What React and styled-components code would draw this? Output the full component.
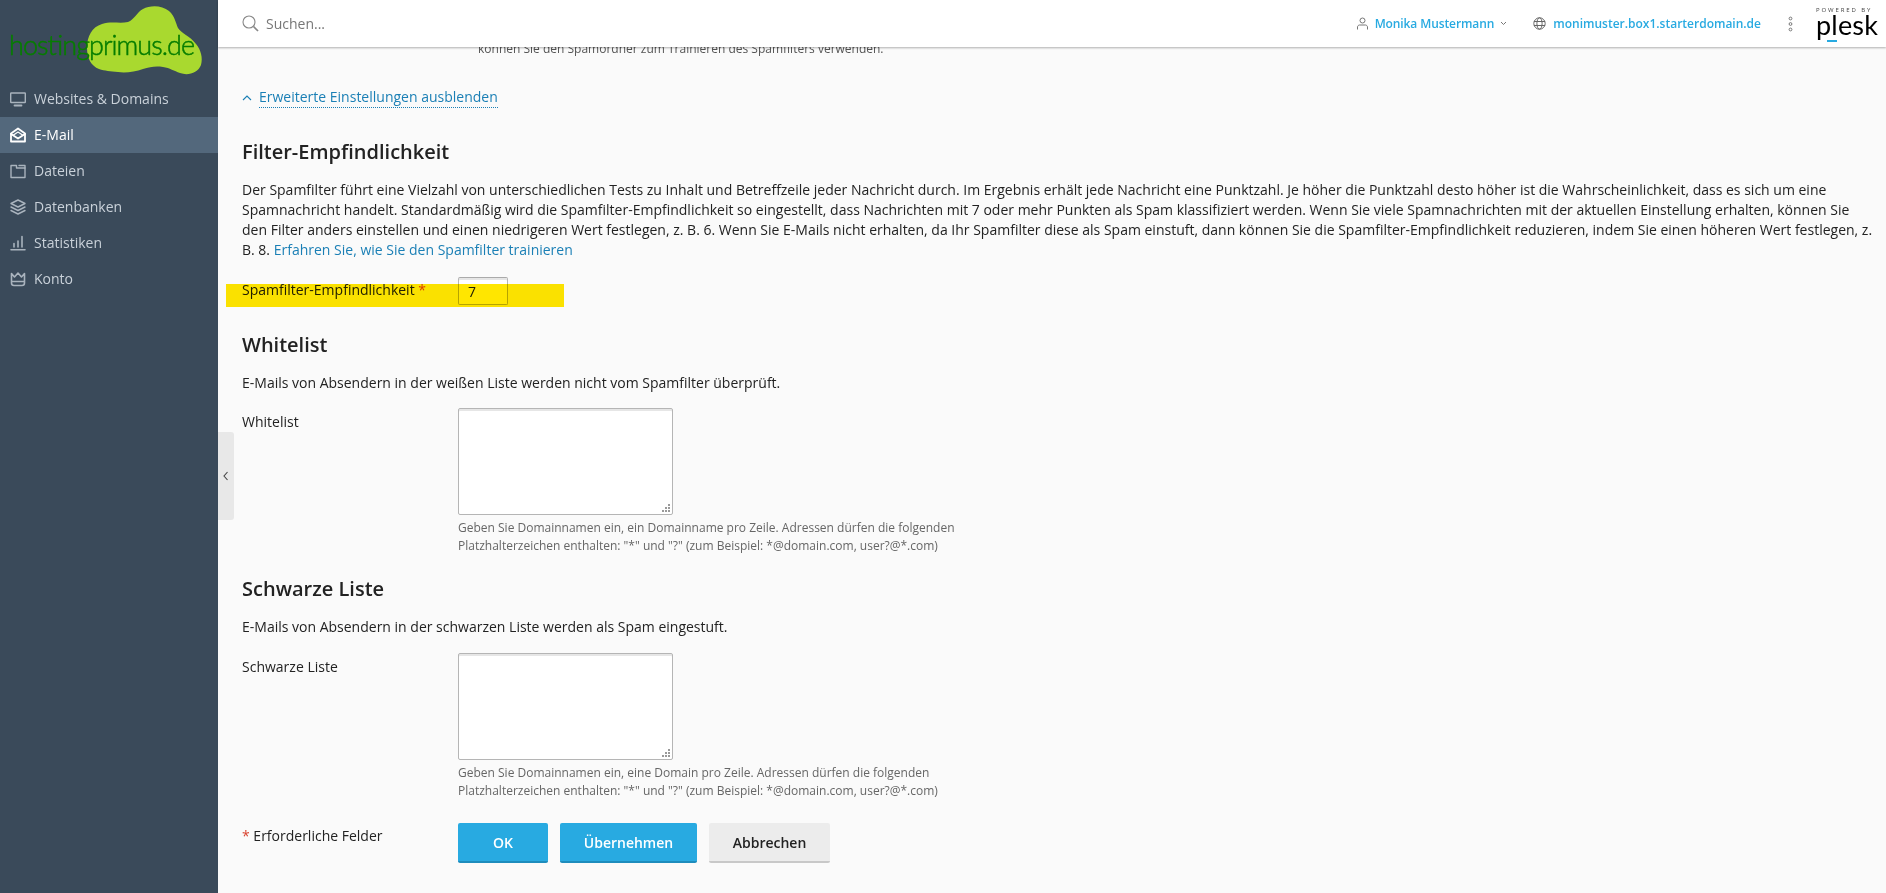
import React from "react";
import styled, { createGlobalStyle } from "styled-components";

const Global = createGlobalStyle`
  html, body { margin: 0; padding: 0; height: 100%; }
  body { font-family: "Open Sans", "Liberation Sans", sans-serif; font-size: 14px; line-height: 20px; color: #222; background: #fafafa; overflow: hidden; }
  #root { height: 100%; }
  * { box-sizing: border-box; }
`;

const Page = styled.div`
  position: relative;
  display: flex;
  width: 1886px;
  height: 893px;
  overflow: hidden;
`;
const Sidebar = styled.aside`
  flex: 0 0 218px;
  background: #3a4a5a;
  display: flex;
  flex-direction: column;
`;
const LogoBox = styled.div`
  height: 81px;
  flex: none;
`;
const NavList = styled.nav`
  display: flex;
  flex-direction: column;
`;
const NavItem = styled.a`
  display: flex;
  align-items: center;
  height: 36px;
  gap: 8px;
  padding-left: 10px;
  color: ${p => (p.$active ? "#fff" : "#c9d1d9")};
  background: ${p => (p.$active ? "#53687c" : "transparent")};
  font-size: 14px;
  svg { flex: none; color: ${p => (p.$active ? "#fff" : "#a9b3bd")}; }
`;
const Collapse = styled.div`
  position: absolute;
  left: 218px;
  top: 432px;
  width: 16px;
  height: 88px;
  background: #e8e8e8;
  border-radius: 0 3px 3px 0;
  display: flex;
  align-items: center;
  justify-content: center;
  z-index: 3;
`;
const Right = styled.div`
  flex: 1;
  min-width: 0;
  display: flex;
  flex-direction: column;
`;
const Header = styled.header`
  height: 47px;
  flex: none;
  display: flex;
  align-items: center;
  background: #fff;
  box-shadow: 0 1px 2px rgba(0,0,0,.3);
  padding: 0 13px 0 24px;
  z-index: 2;
`;
const Search = styled.div`
  flex: 1;
  display: flex;
  align-items: center;
  gap: 7px;
  color: #777;
  font-size: 14px;
`;
const HeaderLink = styled.span`
  display: flex;
  align-items: center;
  color: #28aae1;
  font-size: 12px;
  font-weight: 600;
  svg { flex: none; color: #777; }
`;
const UserLink = styled(HeaderLink)`
  gap: 6px;
  margin-right: 26px;
  letter-spacing: -0.1px;
`;
const DomainLink = styled(HeaderLink)`
  gap: 7px;
  margin-right: 27px;
`;
const Dots = styled.div`
  display: flex;
  margin-right: 23px;
  color: #777;
`;
const PleskBox = styled.div`
  position: relative;
  width: 57px;
  height: 40px;
  color: #111;
`;
const Powered = styled.div`
  font-size: 6px;
  line-height: 8px;
  letter-spacing: 1.9px;
  white-space: nowrap;
  color: #444;
  margin-top: 2px;
`;
const PleskWord = styled.div`
  font-family: "Lato", sans-serif;
  font-weight: 400;
  font-size: 27px;
  line-height: 22px;
  letter-spacing: .2px;
  color: #000;
`;
const PleskBar = styled.div`
  position: absolute;
  left: 11px;
  top: 36px;
  width: 10px;
  height: 2px;
  background: #28aae1;
`;
const Main = styled.main`
  flex: 1;
  min-height: 0;
  overflow: hidden;
  padding: 0 10px 0 24px;
`;
const ClippedNote = styled.div`
  height: 9px;
  margin-left: 236px;
  font-size: 12px;
  line-height: 3px;
  color: #555;
  overflow: hidden;
  white-space: nowrap;
`;
const ToggleRow = styled.div`
  display: flex;
  align-items: center;
  gap: 7px;
  margin-top: 31px;
  height: 21px;
`;
const Toggle = styled.a`
  color: #1a7fb5;
  font-size: 14px;
  line-height: 20px;
  border-bottom: 1px dotted #1a7fb5;
`;
const Heading = styled.h2`
  margin: ${p => p.$top}px 0 0;
  font-size: 20px;
  line-height: 24px;
  font-weight: 600;
  color: #222;
`;
const Para = styled.p`
  margin: ${p => p.$top}px 0 0;
  font-size: 14px;
  line-height: 20px;
`;
const TextLink = styled.a`
  color: #1a7fb5;
`;
const FormRow = styled.div`
  position: relative;
  display: flex;
  margin-top: ${p => p.$top}px;
`;
const Label = styled.label`
  flex: 0 0 216px;
  padding-top: ${p => p.$pad}px;
  font-size: 14px;
  line-height: 20px;
`;
const Star = styled.span`
  color: #d9432f;
`;
const SmallInput = styled.div`
  width: 50px;
  height: 28px;
  border: 1px solid #b5b5b5;
  border-top-color: #aaa;
  border-radius: 2px;
  background: #fff;
  box-shadow: inset 0 2px 0 #e6e6e6;
  padding: 4px 0 0 9px;
  font-size: 14px;
  line-height: 20px;
`;
const Highlight = styled.div`
  position: absolute;
  left: -16px;
  top: 7px;
  width: 338px;
  height: 23px;
  background: #ffe600;
  mix-blend-mode: multiply;
`;
const Field = styled.div`
  display: flex;
  flex-direction: column;
`;
const TextArea = styled.div`
  position: relative;
  width: 215px;
  height: 107px;
  border: 1px solid #b5b5b5;
  border-radius: 2px;
  background: #fff;
  box-shadow: inset 0 2px 0 #e6e6e6;
`;
const Grip = styled.svg`
  position: absolute;
  right: 1px;
  bottom: 1px;
`;
const Hint = styled.div`
  margin-top: 4px;
  font-size: 12px;
  line-height: 18px;
  color: #666;
  white-space: nowrap;
`;
const Actions = styled.div`
  display: flex;
  gap: 12px;
`;
const Button = styled.button`
  width: ${p => p.$w}px;
  height: 40px;
  border: 0;
  border-bottom: 2px solid ${p => (p.$primary ? "#1e8cbc" : "#c8c8c8")};
  border-radius: 2px;
  background: ${p => (p.$primary ? "#28aae1" : "#ececec")};
  color: ${p => (p.$primary ? "#fff" : "#222")};
  font-family: inherit;
  font-size: 14px;
  font-weight: 600;
  padding: 0;
`;

const Logo = () => (
  <svg width="218" height="81" viewBox="0 0 218 81" style={{ display: "block" }}>
    <path fill="#a9d92f" d="M128 22C134 20 137 12 143 9C150 5 162 5 169 11C175 16 176 24 178 28C181 33 190 36 196 44C201 50 203 58 201 65C198 73 188 76 180 73C174 71 170 68 163 67C155 66 150 67 143 69C135 72 125 73 118 72C110 71 105 71 99 69C91 66 87 58 87 48C87 36 92 27 102 24C111 21 120 24 128 22Z" />
    <text x="9" y="55" textLength="186" lengthAdjust="spacing" fill="#067d00" stroke="#067d00" strokeWidth="0.5" fontFamily="Lato, sans-serif" fontWeight="300" fontSize="27">hostingprimus.de</text>
  </svg>
);

const Ic = ({ children, size = 16, sw = 1.4 }) => (
  <svg width={size} height={size} viewBox="0 0 16 16" fill="none" stroke="currentColor" strokeWidth={sw} strokeLinecap="round" strokeLinejoin="round">{children}</svg>
);

const Monitor = () => <Ic><rect x=".7" y="2" width="14.6" height="9.5" rx=".5" /><path d="M4.5 14.5h7" strokeWidth="1.8" /></Ic>;
const Mail = () => (
  <Ic sw={1.8}>
    <path d="M1 6.5 8 1.5l7 5v8H1z" />
    <path d="M3.5 8 8 5l4.5 3" strokeWidth="1.2" />
    <path d="M1 7l7 4.5L15 7" />
  </Ic>
);
const Folder = () => <Ic><path d="M1 2.5h5.5v2.5H15v9.5H1z" /><path d="M9 2.5h6V5" /></Ic>;
const Layers = () => (
  <Ic>
    <path d="M8 1 15 4.5 8 8 1 4.5z" />
    <path d="M1 8l7 3.5L15 8" />
    <path d="M1 11.5 8 15l7-3.5" />
  </Ic>
);
const Bars = () => <Ic><path d="M1 14.8h14M4 12V8.5M8 12V6M12 12V1.5" strokeWidth="1.6" /></Ic>;
const Crown = () => <Ic sw={1.6}><path d="M1.5 2.5 4.5 6 8 2l3.5 4 3-3.5V12c0 1.5-1 2.5-2.5 2.5H4C2.5 14.5 1.5 13.5 1.5 12zM1.5 10.5h13" /></Ic>;

const nav = [
  ["Websites & Domains", Monitor],
  ["E-Mail", Mail, true],
  ["Dateien", Folder],
  ["Datenbanken", Layers],
  ["Statistiken", Bars],
  ["Konto", Crown],
];

const GripIcon = () => (
  <Grip width="9" height="9" viewBox="0 0 9 9" fill="#999">
    <rect x="6" y="0" width="2" height="2" /><rect x="3" y="3" width="2" height="2" /><rect x="6" y="3" width="2" height="2" />
    <rect x="0" y="6" width="2" height="2" /><rect x="3" y="6" width="2" height="2" /><rect x="6" y="6" width="2" height="2" />
  </Grip>
);

export default function App() {
  return (
    <Page>
      <Global />
      <Sidebar>
        <LogoBox><Logo /></LogoBox>
        <NavList>
          {nav.map(([label, Icon, active]) => (
            <NavItem key={label} $active={active}><Icon />{label}</NavItem>
          ))}
        </NavList>
      </Sidebar>
      <Collapse>
        <svg width="8" height="10" viewBox="0 0 8 10" fill="none" stroke="#444" strokeWidth="1.1"><path d="M5.5 1 2 5l3.5 4" /></svg>
      </Collapse>
      <Right>
        <Header>
          <Search>
            <svg width="17" height="17" viewBox="0 0 17 17" fill="none" stroke="#888" strokeWidth="1.1"><circle cx="7" cy="7" r="6" /><path d="m11.5 11.5 4.5 4.5" strokeWidth="1.7" /></svg>
            Suchen...
          </Search>
          <UserLink>
            <svg width="13" height="13" viewBox="0 0 13 13" fill="none" stroke="#777"><circle cx="6.5" cy="3.5" r="2.5" /><path d="M1.5 12.5V10c0-1 1-2 2-2h6c1 0 2 1 2 2v2.5" /></svg>
            Monika Mustermann
            <svg width="7" height="5" viewBox="0 0 7 5" fill="none" stroke="#777"><path d="m1 1 2.5 2.5L6 1" /></svg>
          </UserLink>
          <DomainLink>
            <svg width="13" height="13" viewBox="0 0 13 13" fill="none" stroke="#666"><circle cx="6.5" cy="6.5" r="5.7" /><ellipse cx="6.5" cy="6.5" rx="2.6" ry="5.7" /><path d="M1 4.5h11M1 8.5h11" /></svg>
            monimuster.box1.starterdomain.de
          </DomainLink>
          <Dots>
            <svg width="5" height="16" viewBox="0 0 5 16" fill="none" stroke="currentColor"><circle cx="2.5" cy="2.5" r="1.4" /><circle cx="2.5" cy="8" r="1.4" /><circle cx="2.5" cy="13.5" r="1.4" /></svg>
          </Dots>
          <PleskBox>
            <Powered>POWERED BY</Powered>
            <PleskWord>plesk</PleskWord>
            <PleskBar />
          </PleskBox>
        </Header>
        <Main>
          <ClippedNote>können Sie den Spamordner zum Trainieren des Spamfilters verwenden.</ClippedNote>
          <ToggleRow>
            <svg width="10" height="6" viewBox="0 0 10 6" fill="none" stroke="#1a7fb5" strokeWidth="1.1"><path d="m1 5 4-4 4 4" /></svg>
            <Toggle>Erweiterte Einstellungen ausblenden</Toggle>
          </ToggleRow>
          <Heading $top={32}>Filter-Empfindlichkeit</Heading>
          <Para $top={16}>
            Der Spamfilter führt eine Vielzahl von unterschiedlichen Tests zu Inhalt und Betreffzeile jeder Nachricht durch. Im Ergebnis erhält jede Nachricht eine Punktzahl. Je höher die Punktzahl desto höher ist die Wahrscheinlichkeit, dass es sich um eine Spamnachricht handelt. Standardmäßig wird die Spamfilter-Empfindlichkeit so eingestellt, dass Nachrichten mit 7 oder mehr Punkten als Spam klassifiziert werden. Wenn Sie viele Spamnachrichten mit der aktuellen Einstellung erhalten, können Sie den Filter anders einstellen und einen niedrigeren Wert festlegen, z. B. 6. Wenn Sie E-Mails nicht erhalten, da Ihr Spamfilter diese als Spam einstuft, dann können Sie die Spamfilter-Empfindlichkeit reduzieren, indem Sie einen höheren Wert festlegen, z. B. 8. <TextLink>Erfahren Sie, wie Sie den Spamfilter trainieren</TextLink>
          </Para>
          <FormRow $top={17}>
            <Label $pad={3}>Spamfilter-Empfindlichkeit <Star>*</Star></Label>
            <SmallInput>7</SmallInput>
            <Highlight />
          </FormRow>
          <Heading $top={28}>Whitelist</Heading>
          <Para $top={16}>E-Mails von Absendern in der weißen Liste werden nicht vom Spamfilter überprüft.</Para>
          <FormRow $top={15}>
            <Label $pad={4}>Whitelist</Label>
            <Field>
              <TextArea><GripIcon /></TextArea>
              <Hint>Geben Sie Domainnamen ein, ein Domainname pro Zeile. Adressen dürfen die folgenden<br />Platzhalterzeichen enthalten: "*" und "?" (zum Beispiel: *@domain.com, user?@*.com)</Hint>
            </Field>
          </FormRow>
          <Heading $top={22}>Schwarze Liste</Heading>
          <Para $top={16}>E-Mails von Absendern in der schwarzen Liste werden als Spam eingestuft.</Para>
          <FormRow $top={16}>
            <Label $pad={4}>Schwarze Liste</Label>
            <Field>
              <TextArea><GripIcon /></TextArea>
              <Hint>Geben Sie Domainnamen ein, eine Domain pro Zeile. Adressen dürfen die folgenden<br />Platzhalterzeichen enthalten: "*" und "?" (zum Beispiel: *@domain.com, user?@*.com)</Hint>
            </Field>
          </FormRow>
          <FormRow $top={23}>
            <Label $pad={3}><Star>*</Star> Erforderliche Felder</Label>
            <Actions>
              <Button $primary $w={90}>OK</Button>
              <Button $primary $w={137}>Übernehmen</Button>
              <Button $w={121}>Abbrechen</Button>
            </Actions>
          </FormRow>
        </Main>
      </Right>
    </Page>
  );
}
